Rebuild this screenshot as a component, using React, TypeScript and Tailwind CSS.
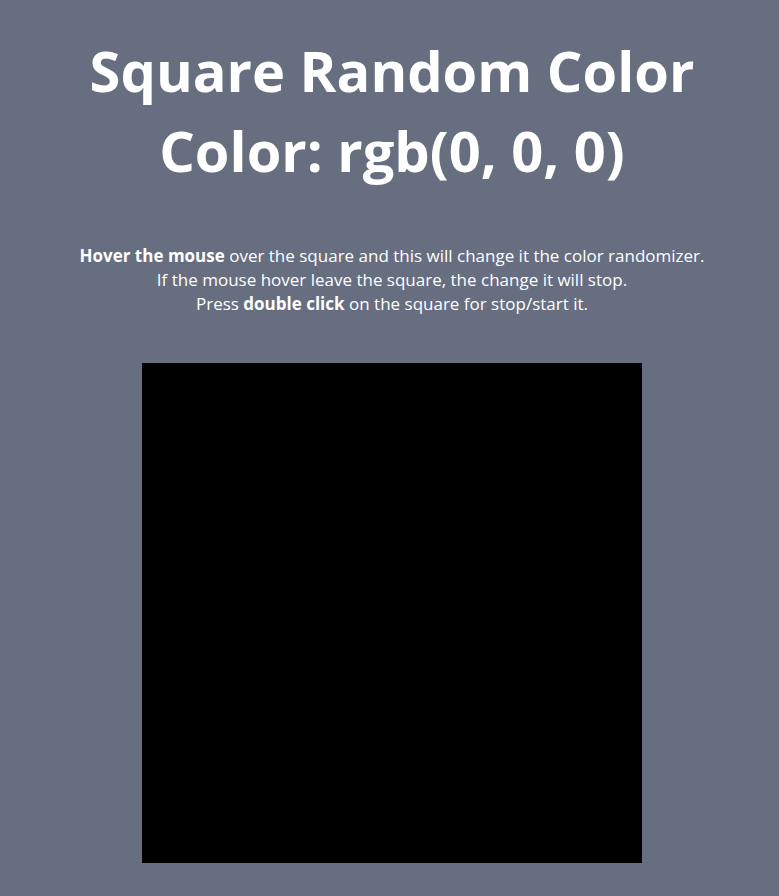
import React, { useState } from 'react';

const App = () => {
  const [color] = useState('rgb(0, 0, 0)');

  return (
    <div className="min-h-[896px] bg-[#666e80] text-white font-['Open_Sans',sans-serif] flex flex-col items-center pl-[5px]">
      <h1 className="mt-[30px] text-[56px] leading-[80px] font-bold text-center">
        Square Random Color
        <br />
        Color: {color}
      </h1>

      <p className="mt-[54px] text-[17px] leading-[24px] text-center">
        <b>Hover the mouse</b> over the square and this will change it the color randomizer.
        <br />
        If the mouse hover leave the square, the change it will stop.
        <br />
        Press <b>double click</b> on the square for stop/start it.
      </p>

      <div className="mt-[47px] w-[500px] h-[500px]" style={{ backgroundColor: color }} />
    </div>
  );
};

export default App;
